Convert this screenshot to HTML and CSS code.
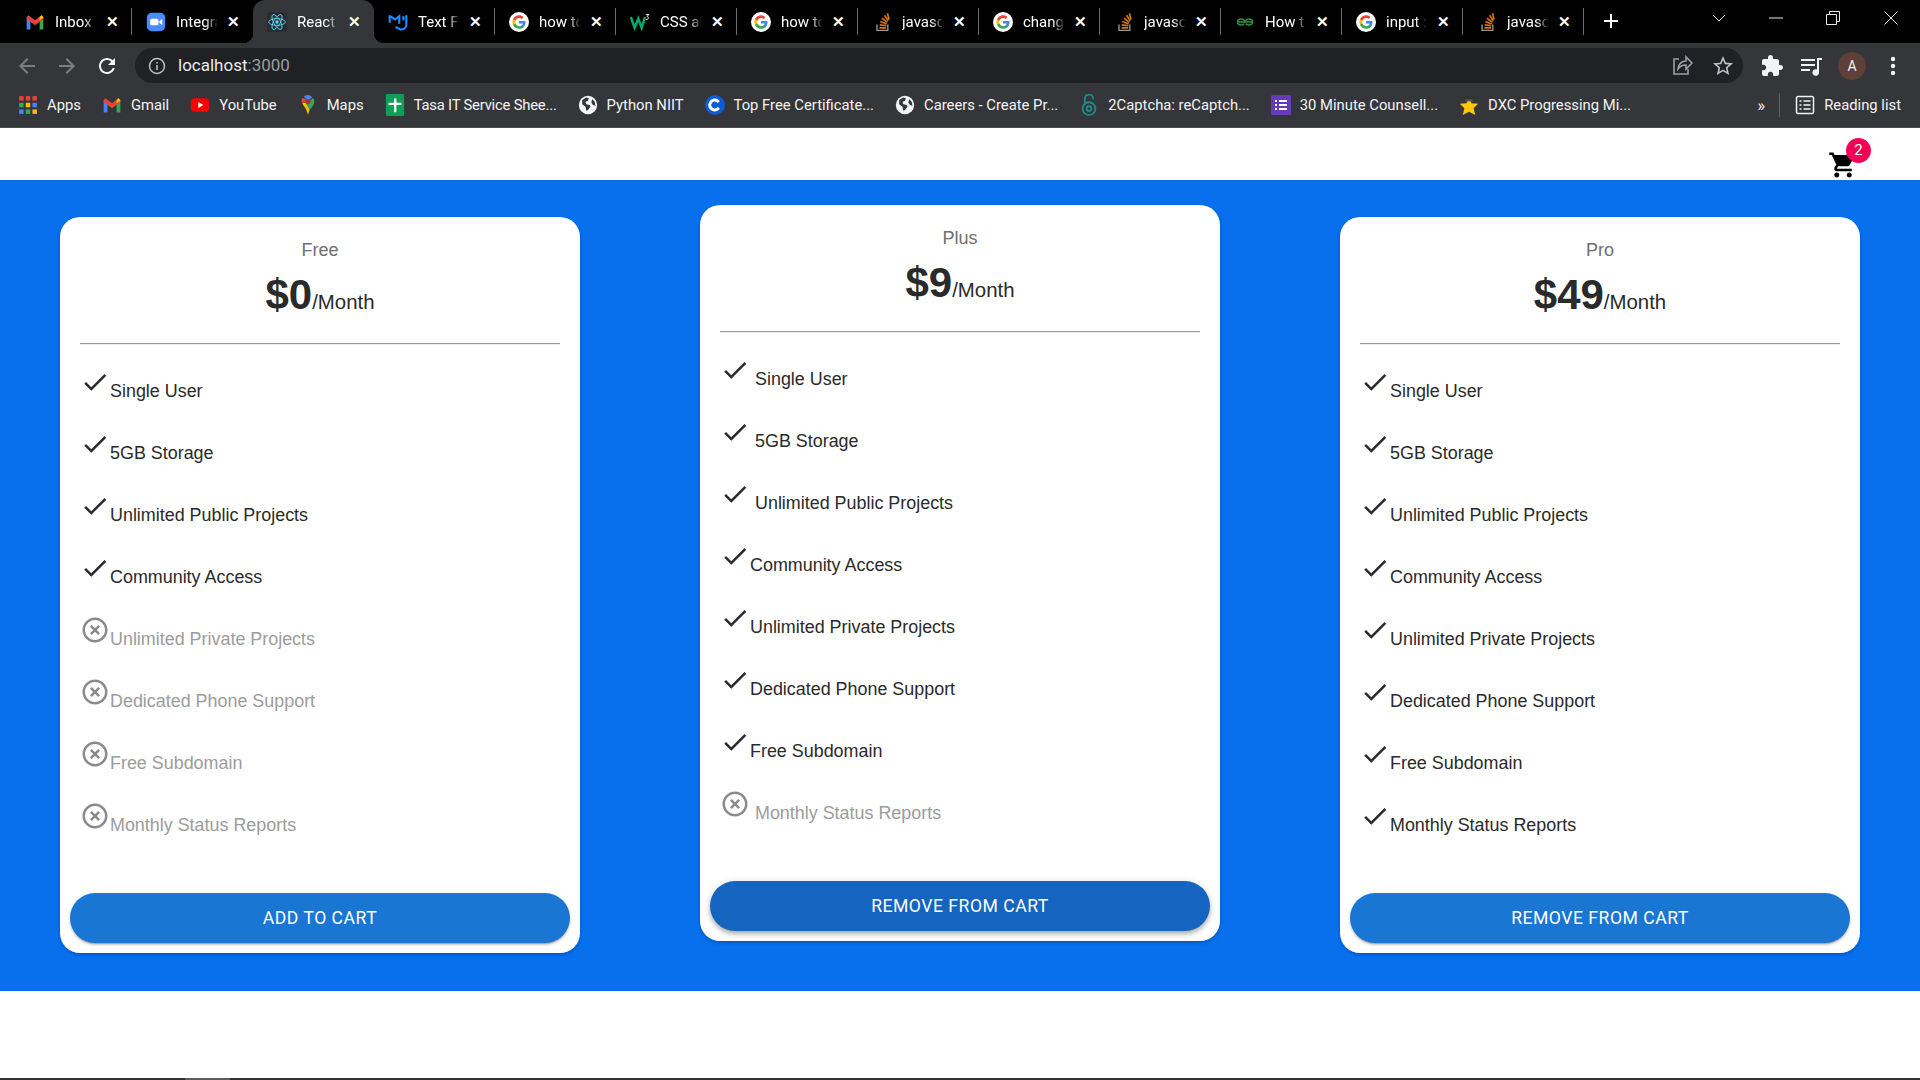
FILE: index.html
```html
<!DOCTYPE html>
<html lang="en">
<head>
    <meta charset="UTF-8">
    <title>React App</title>
    <link rel="stylesheet" href="styles.css">
</head>
<body>
    <svg class="sprite" xmlns="http://www.w3.org/2000/svg">
        <symbol id="fav-gmail" viewBox="0 0 24 24">
            <path fill="#4285f4" d="M2 21V7l4.500 3v11z"/>
            <path fill="#34a853" d="M22 21V7l-4.500 3v11z"/>
            <path fill="#ea4335" d="M2 6l2-2.200L12 10l8-6.200L22 6v2.500L12 16 2 8.500z"/>
            <path fill="#fbbc04" d="M17.500 10L22 7V6l-2-2.200-2.500 2z"/>
        </symbol>
        <symbol id="fav-zoom" viewBox="0 0 24 24">
            <rect x="1" y="1" width="22" height="22" rx="6" fill="#4a8cff"/>
            <rect x="5" y="8" width="10" height="8" rx="2" fill="#fff"/>
            <path fill="#fff" d="M16 11l3.500-2.500v7L16 13z"/>
        </symbol>
        <symbol id="fav-react" viewBox="0 0 24 24">
            <rect width="24" height="24" rx="2" fill="#2a2d31"/>
            <g fill="none" stroke="#61dafb" stroke-width="1">
                <ellipse cx="12" cy="12" rx="10" ry="4"/>
                <ellipse cx="12" cy="12" rx="10" ry="4" transform="rotate(60 12 12)"/>
                <ellipse cx="12" cy="12" rx="10" ry="4" transform="rotate(120 12 12)"/>
            </g>
            <circle cx="12" cy="12" r="2" fill="#61dafb"/>
        </symbol>
        <symbol id="fav-mui" viewBox="0 0 24 24">
            <g fill="none" stroke="#1a8cff" stroke-width="2.600">
                <path d="M2 4v9M2.500 5l6 4 5-4v9"/>
                <path d="M22 4v12c0 3-3 5-7 5l-6-3"/>
                <path d="M18.500 5v5"/>
            </g>
        </symbol>
        <symbol id="fav-google" viewBox="0 0 30 30">
            <circle cx="15" cy="15" r="15" fill="#fff"/>
            <g transform="translate(5 5) scale(.84)">
                <path fill="#4285f4" d="M23.500 12.300c0-.8-.1-1.600-.2-2.300H12v4.500h6.500c-.3 1.500-1.100 2.800-2.400 3.600v3h3.900c2.300-2.100 3.500-5.200 3.500-8.800z"/>
                <path fill="#34a853" d="M12 24c3.200 0 6-1.100 8-2.900l-3.900-3c-1.100.7-2.500 1.200-4.100 1.200-3.100 0-5.800-2.100-6.700-5H1.300v3.100C3.300 21.300 7.400 24 12 24z"/>
                <path fill="#fbbc04" d="M5.300 14.300c-.2-.7-.4-1.500-.4-2.300s.1-1.600.4-2.300V6.600h-4C.5 8.200 0 10 0 12s.5 3.800 1.300 5.400z"/>
                <path fill="#ea4335" d="M12 4.800c1.800 0 3.300.6 4.600 1.800l3.400-3.400C18 1.200 15.200 0 12 0 7.400 0 3.300 2.700 1.300 6.600l4 3.100c.9-2.800 3.600-4.900 6.700-4.900z"/>
            </g>
        </symbol>
        <symbol id="fav-w3" viewBox="0 0 24 24">
            <path fill="none" stroke="#04aa6d" stroke-width="3" d="M1 6l4.500 13L10 8l4 11 4-13"/>
            <path fill="none" stroke="#fff" stroke-width="1.200" d="M19 3h3.500l-2 2.500c2 0 2.500 3-.5 3.500h-1"/>
        </symbol>
        <symbol id="fav-so" viewBox="0 0 24 24">
            <path fill="none" stroke="#999" stroke-width="1.600" d="M6 15v7h13v-7"/>
            <g fill="none" stroke="#d9730d" stroke-width="2">
                <path d="M9 19h8M9.300 15.500l8 1M10 11.500l7.600 3M12 7.500l6.500 5M15 4l4.500 6.500M18.500 1.500l2 7.500"/>
            </g>
        </symbol>
        <symbol id="fav-gfg" viewBox="0 0 24 24">
            <g fill="none" stroke="#2f8d46" stroke-width="1.800">
                <path d="M3 12h18M12 12c-.5-2.500-2-3.500-4.500-3.500S3 10 3 12s2 3.500 4.500 3.500c1.500 0 3-.5 3.500-1.500"/>
                <path d="M12 12c.5-2.500 2-3.500 4.500-3.500S21 10 21 12s-2 3.500-4.500 3.500c-1.500 0-3-.5-3.500-1.500"/>
            </g>
        </symbol>
        <symbol id="bm-apps" viewBox="0 0 18 18">
            <rect x="1" y="1" width="4" height="4" fill="#ea4335"/><rect x="7" y="1" width="4" height="4" fill="#ea4335"/><rect x="13" y="1" width="4" height="4" fill="#ea4335"/>
            <rect x="1" y="7" width="4" height="4" fill="#34a853"/><rect x="7" y="7" width="4" height="4" fill="#fbbc04"/><rect x="13" y="7" width="4" height="4" fill="#4285f4"/>
            <rect x="1" y="13" width="4" height="4" fill="#4285f4"/><rect x="7" y="13" width="4" height="4" fill="#34a853"/><rect x="13" y="13" width="4" height="4" fill="#fbbc04"/>
        </symbol>
        <symbol id="bm-youtube" viewBox="0 0 24 24">
            <rect x="1" y="4" width="22" height="16" rx="4.500" fill="#f00"/>
            <path fill="#fff" d="M10 8.500l6 3.500-6 3.500z"/>
        </symbol>
        <symbol id="bm-maps" viewBox="0 0 24 24">
            <path fill="#4285f4" d="M12 0c-2 0-4 .7-5 2l5 5 5-4c-1-2-3-3-5-3z"/>
            <path fill="#ea4335" d="M5 3.500C4 6 4 8 5 9.500L9 8l1-3z"/>
            <path fill="#fbbc04" d="M5 9.500c1.500 3.500 5.500 7 7 14.500.5-2 1-4 2-6l-3.500-9z"/>
            <path fill="#34a853" d="M14 18c1.500-2.500 5.500-5 5.500-10.500 0-1.500-.5-3-1.500-4l-8 7.500z"/>
            <circle cx="12" cy="8" r="3" fill="#a33"/>
        </symbol>
        <symbol id="bm-sheet" viewBox="0 0 20 24">
            <rect width="20" height="24" rx="1.500" fill="#0f9d58"/>
            <path fill="#fff" d="M9 5h2.500v4.500H17V12h-5.500v8H9v-8H3V9.500h6z"/>
        </symbol>
        <symbol id="bm-globe" viewBox="0 0 24 24">
            <circle cx="12" cy="12" r="11" fill="#f1f3f4"/>
            <path fill="#35363a" d="M5 6l5-3 3 1-1 3-3 1 1 3 4 1 1 2-3 4-2 1-1-5-4-3zM17 5l3 3 1 5-3-1-2-3z"/>
        </symbol>
        <symbol id="bm-c" viewBox="0 0 24 24">
            <circle cx="12" cy="12" r="12" fill="#0b5cd5"/>
            <path fill="none" stroke="#fff" stroke-width="3.600" d="M16.500 8.500a6 6 0 1 0 0 7"/>
        </symbol>
        <symbol id="bm-lock" viewBox="0 0 16 24">
            <g fill="none" stroke="#1b8a8f" stroke-width="2">
                <path d="M3.500 10V5a4.500 4.500 0 0 1 9 0v1"/>
                <circle cx="8" cy="16" r="7"/>
                <circle cx="8" cy="16" r="2.600"/>
            </g>
        </symbol>
        <symbol id="bm-forms" viewBox="0 0 20 20">
            <rect width="20" height="20" rx="1.500" fill="#673ab7"/>
            <path fill="#fff" d="M4 5h2v2H4zM8 5h8v2H8zM4 9h2v2H4zM8 9h8v2H8zM4 13h2v2H4zM8 13h8v2H8z"/>
        </symbol>
        <symbol id="bm-star" viewBox="0 0 24 24">
            <path fill="#fdc70c" d="M12 4l3 6 8 .5-5.500 5.500 2 8-7.500-4-7.500 4 2-8L1 10.500 9 10z"/>
            <path fill="#333" d="M12 0l8 3.500L12 7 4 3.500z"/>
            <path fill="#555" d="M7.500 5h9v2.500h-9z"/>
        </symbol>
        <symbol id="ic-check" viewBox="0 0 24 24">
            <path d="M9 16.170 4.830 12l-1.420 1.410L9 19 21 7l-1.410-1.410z"/>
        </symbol>
        <symbol id="ic-off" viewBox="0 0 24 24">
            <path d="M14.590 8 12 10.590 9.410 8 8 9.410 10.590 12 8 14.590 9.410 16 12 13.410 14.590 16 16 14.590 13.410 12 16 9.410 14.590 8zM12 2C6.470 2 2 6.470 2 12s4.470 10 10 10 10-4.470 10-10S17.530 2 12 2zm0 18c-4.410 0-8-3.590-8-8s3.590-8 8-8 8 3.590 8 8-3.590 8-8 8z"/>
        </symbol>
    </svg>

    <div class="tabstrip">
        <div class="tab"><svg class="favicon"><use href="#fav-gmail"/></svg><span class="tab-title">Inbox</span><span class="tab-close">&#10005;</span></div>
        <div class="tab tab-plain"><svg class="favicon"><use href="#fav-zoom"/></svg><span class="tab-title">Integra</span><span class="tab-close">&#10005;</span></div>
        <div class="tab tab-active tab-plain"><svg class="favicon"><use href="#fav-react"/></svg><span class="tab-title">React A</span><span class="tab-close">&#10005;</span></div>
        <div class="tab"><svg class="favicon"><use href="#fav-mui"/></svg><span class="tab-title">Text Fi</span><span class="tab-close">&#10005;</span></div>
        <div class="tab"><svg class="favicon"><use href="#fav-google"/></svg><span class="tab-title">how to</span><span class="tab-close">&#10005;</span></div>
        <div class="tab"><svg class="favicon"><use href="#fav-w3"/></svg><span class="tab-title">CSS al</span><span class="tab-close">&#10005;</span></div>
        <div class="tab"><svg class="favicon"><use href="#fav-google"/></svg><span class="tab-title">how to</span><span class="tab-close">&#10005;</span></div>
        <div class="tab"><svg class="favicon"><use href="#fav-so"/></svg><span class="tab-title">javascr</span><span class="tab-close">&#10005;</span></div>
        <div class="tab"><svg class="favicon"><use href="#fav-google"/></svg><span class="tab-title">chang</span><span class="tab-close">&#10005;</span></div>
        <div class="tab"><svg class="favicon"><use href="#fav-so"/></svg><span class="tab-title">javascr</span><span class="tab-close">&#10005;</span></div>
        <div class="tab"><svg class="favicon"><use href="#fav-gfg"/></svg><span class="tab-title">How t</span><span class="tab-close">&#10005;</span></div>
        <div class="tab"><svg class="favicon"><use href="#fav-google"/></svg><span class="tab-title">input :</span><span class="tab-close">&#10005;</span></div>
        <div class="tab"><svg class="favicon"><use href="#fav-so"/></svg><span class="tab-title">javasc</span><span class="tab-close">&#10005;</span></div>
        <svg class="newtab" viewBox="0 0 16 16"><path d="M7 1h2v6h6v2H9v6H7V9H1V7h6z"/></svg>
        <div class="window-controls">
            <svg class="win-caret" viewBox="0 0 14 8"><path d="M1 1l6 6 6-6"/></svg>
            <svg class="win-min" viewBox="0 0 14 14"><path d="M0 7h14"/></svg>
            <svg class="win-restore" viewBox="0 0 14 14"><path d="M.5 3.500h10v10H.5zM3.500 3.500v-3h10v10h-3"/></svg>
            <svg class="win-close" viewBox="0 0 14 14"><path d="M.5.500l13 13M13.500.500l-13 13"/></svg>
        </div>
    </div>

    <div class="toolbar">
        <svg class="tool-icon tool-dim" viewBox="0 0 24 24"><path d="M20 11H7.830l5.590-5.590L12 4l-8 8 8 8 1.410-1.410L7.830 13H20v-2z"/></svg>
        <svg class="tool-icon tool-dim" viewBox="0 0 24 24"><path d="M4 11h12.170l-5.590-5.590L12 4l8 8-8 8-1.410-1.410L16.170 13H4v-2z"/></svg>
        <svg class="tool-icon" viewBox="0 0 24 24"><path d="M17.650 6.350C16.200 4.900 14.210 4 12 4c-4.420 0-7.990 3.580-7.990 8s3.570 8 7.990 8c3.730 0 6.840-2.550 7.730-6h-2.080c-.82 2.330-3.040 4-5.650 4-3.310 0-6-2.690-6-6s2.690-6 6-6c1.660 0 3.140.69 4.220 1.780L13 11h7V4l-2.350 2.350z"/></svg>
        <div class="omnibox">
            <svg class="info-icon" viewBox="0 0 20 20">
                <circle cx="10" cy="10" r="7.500"/>
                <path d="M10 9v5M10 6v1.600"/>
            </svg>
            <span class="url">localhost<span class="url-port">:3000</span></span>
            <svg class="omni-icon omni-share" viewBox="0 0 24 24"><path d="M9 5H4v15h14v-5M8 15c0-5 4-8 8-8V3l6 6-6 6v-4c-4 0-6 1-8 4z"/></svg>
            <svg class="omni-icon" viewBox="0 0 24 24"><path fill="#bdc1c6" d="M22 9.240l-7.190-.62L12 2 9.190 8.630 2 9.240l5.460 4.730L5.820 21 12 17.270 18.180 21l-1.630-7.030L22 9.240zM12 15.400l-3.760 2.270 1-4.280-3.320-2.880 4.380-.38L12 6.100l1.710 4.040 4.380.38-3.320 2.880 1 4.280L12 15.400z"/></svg>
        </div>
        <div class="toolbar-actions">
            <svg class="tool-icon" viewBox="0 0 24 24"><path d="M20.500 11H19V7c0-1.100-.9-2-2-2h-4V3.500C13 2.120 11.880 1 10.500 1S8 2.120 8 3.500V5H4c-1.100 0-1.990.9-1.990 2v3.800H3.500c1.490 0 2.700 1.210 2.700 2.700s-1.210 2.700-2.700 2.700H2V20c0 1.100.9 2 2 2h3.800v-1.500c0-1.490 1.210-2.700 2.700-2.700 1.490 0 2.700 1.210 2.700 2.700V22H17c1.100 0 2-.9 2-2v-4h1.500c1.380 0 2.500-1.120 2.500-2.500S21.880 11 20.500 11z"/></svg>
            <svg class="tool-icon" viewBox="0 0 24 24"><path d="M2 5h14v2H2zM2 10h14v2H2zM2 15h9v2H2zM18 4h5v2h-3v12.500a3.300 3.300 0 1 1-2-3z"/></svg>
            <span class="avatar">A</span>
            <svg class="tool-icon" viewBox="0 0 24 24"><circle cx="12" cy="5" r="2.200"/><circle cx="12" cy="12" r="2.200"/><circle cx="12" cy="19" r="2.200"/></svg>
        </div>
    </div>

    <div class="bookmarks">
        <span class="bookmark"><svg class="bm-icon"><use href="#bm-apps"/></svg>Apps</span>
        <span class="bookmark"><svg class="bm-icon"><use href="#fav-gmail"/></svg>Gmail</span>
        <span class="bookmark"><svg class="bm-icon"><use href="#bm-youtube"/></svg>YouTube</span>
        <span class="bookmark"><svg class="bm-icon"><use href="#bm-maps"/></svg>Maps</span>
        <span class="bookmark bm-tight"><svg class="bm-icon"><use href="#bm-sheet"/></svg>Tasa IT Service Shee...</span>
        <span class="bookmark"><svg class="bm-icon"><use href="#bm-globe"/></svg>Python NIIT</span>
        <span class="bookmark"><svg class="bm-icon"><use href="#bm-c"/></svg>Top Free Certificate...</span>
        <span class="bookmark"><svg class="bm-icon"><use href="#bm-globe"/></svg>Careers - Create Pr...</span>
        <span class="bookmark"><svg class="bm-icon"><use href="#bm-lock"/></svg>2Captcha: reCaptch...</span>
        <span class="bookmark"><svg class="bm-icon"><use href="#bm-forms"/></svg>30 Minute Counsell...</span>
        <span class="bookmark"><svg class="bm-icon"><use href="#bm-star"/></svg>DXC Progressing Mi...</span>
        <span class="bm-more">&raquo;</span>
        <span class="bookmark bm-reading">
            <svg class="bm-icon reading-icon" viewBox="0 0 20 20"><rect x="1.500" y="1.500" width="17" height="17" rx="1.500"/><path d="M4.500 6h2M8.500 6h7M4.500 10h2M8.500 10h7M4.500 14h2M8.500 14h7"/></svg>Reading list
        </span>
    </div>

    <div class="page">
        <header class="app-bar">
            <span class="cart">
                <svg class="cart-icon" viewBox="0 0 24 24"><path d="M7 18c-1.100 0-1.990.9-1.990 2S5.900 22 7 22s2-.9 2-2-.9-2-2-2zM1 2v2h2l3.600 7.590-1.350 2.450c-.16.280-.25.610-.25.960 0 1.100.9 2 2 2h12v-2H7.420c-.14 0-.25-.11-.25-.25l.03-.12.9-1.630h7.450c.75 0 1.410-.41 1.750-1.030l3.580-6.470c.08-.12.12-.28.12-.46 0-.55-.45-1-1-1H5.210l-.94-2H1zm16 16c-1.100 0-1.990.9-1.990 2s.89 2 1.990 2 2-.9 2-2-.9-2-2-2z"/></svg>
                <span class="cart-badge">2</span>
            </span>
        </header>

        <section class="pricing">
            <div class="plan">
                <div class="plan-name">Free</div>
                <div class="plan-price"><strong>$0</strong>/Month</div>
                <hr class="plan-rule">
                <ul class="features">
                    <li><svg class="feature-icon"><use href="#ic-check"/></svg><span>Single User</span></li>
                    <li><svg class="feature-icon"><use href="#ic-check"/></svg><span>5GB Storage</span></li>
                    <li><svg class="feature-icon"><use href="#ic-check"/></svg><span>Unlimited Public Projects</span></li>
                    <li><svg class="feature-icon"><use href="#ic-check"/></svg><span>Community Access</span></li>
                    <li class="off"><svg class="feature-icon"><use href="#ic-off"/></svg><span>Unlimited Private Projects</span></li>
                    <li class="off"><svg class="feature-icon"><use href="#ic-off"/></svg><span>Dedicated Phone Support</span></li>
                    <li class="off"><svg class="feature-icon"><use href="#ic-off"/></svg><span>Free Subdomain</span></li>
                    <li class="off"><svg class="feature-icon"><use href="#ic-off"/></svg><span>Monthly Status Reports</span></li>
                </ul>
                <button class="plan-btn" type="button">Add to cart</button>
            </div>

            <div class="plan plan-featured">
                <div class="plan-name">Plus</div>
                <div class="plan-price"><strong>$9</strong>/Month</div>
                <hr class="plan-rule">
                <ul class="features">
                    <li class="indent"><svg class="feature-icon"><use href="#ic-check"/></svg><span>Single User</span></li>
                    <li class="indent"><svg class="feature-icon"><use href="#ic-check"/></svg><span>5GB Storage</span></li>
                    <li class="indent"><svg class="feature-icon"><use href="#ic-check"/></svg><span>Unlimited Public Projects</span></li>
                    <li><svg class="feature-icon"><use href="#ic-check"/></svg><span>Community Access</span></li>
                    <li><svg class="feature-icon"><use href="#ic-check"/></svg><span>Unlimited Private Projects</span></li>
                    <li><svg class="feature-icon"><use href="#ic-check"/></svg><span>Dedicated Phone Support</span></li>
                    <li><svg class="feature-icon"><use href="#ic-check"/></svg><span>Free Subdomain</span></li>
                    <li class="off indent"><svg class="feature-icon"><use href="#ic-off"/></svg><span>Monthly Status Reports</span></li>
                </ul>
                <button class="plan-btn plan-btn-hover" type="button">Remove from cart</button>
            </div>

            <div class="plan">
                <div class="plan-name">Pro</div>
                <div class="plan-price"><strong>$49</strong>/Month</div>
                <hr class="plan-rule">
                <ul class="features">
                    <li><svg class="feature-icon"><use href="#ic-check"/></svg><span>Single User</span></li>
                    <li><svg class="feature-icon"><use href="#ic-check"/></svg><span>5GB Storage</span></li>
                    <li><svg class="feature-icon"><use href="#ic-check"/></svg><span>Unlimited Public Projects</span></li>
                    <li><svg class="feature-icon"><use href="#ic-check"/></svg><span>Community Access</span></li>
                    <li><svg class="feature-icon"><use href="#ic-check"/></svg><span>Unlimited Private Projects</span></li>
                    <li><svg class="feature-icon"><use href="#ic-check"/></svg><span>Dedicated Phone Support</span></li>
                    <li><svg class="feature-icon"><use href="#ic-check"/></svg><span>Free Subdomain</span></li>
                    <li><svg class="feature-icon"><use href="#ic-check"/></svg><span>Monthly Status Reports</span></li>
                </ul>
                <button class="plan-btn" type="button">Remove from cart</button>
            </div>
        </section>
    </div>

    <div class="scrollbar"><span class="scrollbar-thumb"></span></div>
</body>
</html>
```

FILE: styles.css
```css
* {
    box-sizing: border-box;
}

body {
    margin: 0;
    height: 1080px;
    overflow: hidden;
    display: flex;
    flex-direction: column;
    background: #fff;
    font-family: 'Liberation Sans', Arial, sans-serif;
}

.sprite {
    display: none;
}

/* browser chrome */
.tabstrip {
    height: 43px;
    background: #000;
    display: flex;
    padding-left: 11px;
    color: #fff;
    font-family: 'Roboto', sans-serif;
}

.tab {
    position: relative;
    width: 121px;
    height: 43px;
    display: flex;
    align-items: center;
    padding: 0 14px 0 14px;
    border-right: 1px solid #5f6368;
    border-image: linear-gradient(#000 9px, #6a6a6a 9px, #6a6a6a 34px, #000 34px) 1;
    font-size: 15px;
    flex: none;
}

.tab-plain {
    border-right: 0;
}

.tab-active {
    background: #35363a;
    border-radius: 12px 12px 0 0;
}

.tab-active::before,
.tab-active::after {
    content: "";
    position: absolute;
    bottom: 0;
    width: 10px;
    height: 10px;
}

.tab-active::before {
    left: -10px;
    background: radial-gradient(circle at 0 0, #000 10px, #35363a 10.5px);
}

.tab-active::after {
    right: -10px;
    background: radial-gradient(circle at 100% 0, #000 10px, #35363a 10.5px);
}

.favicon {
    width: 20px;
    height: 20px;
    flex: none;
    margin-right: 10px;
    margin-top: 1px;
}

.tab-title {
    width: 42px;
    flex: none;
    overflow: hidden;
    white-space: nowrap;
    -webkit-mask-image: linear-gradient(90deg, #000 70%, transparent);
    mask-image: linear-gradient(90deg, #000 70%, transparent);
}

.tab-close {
    margin-left: 9px;
    font-size: 15px;
    font-weight: 700;
    width: 14px;
    text-align: center;
}

.newtab {
    width: 16px;
    height: 16px;
    margin: 13px 0 0 19px;
    fill: #fff;
}

.window-controls {
    display: flex;
    align-items: center;
    margin-left: auto;
    height: 36px;
}

.window-controls svg {
    fill: none;
    stroke: #e8eaed;
    stroke-width: 1;
    width: 14px;
    height: 14px;
    flex: none;
}

.win-caret {
    margin-right: 43px;
}

.win-min {
    margin-right: 43px;
}

.win-restore {
    margin-right: 44px;
}

.window-controls .win-close {
    margin-right: 22px;
}

.toolbar {
    height: 40px;
    padding: 5px 15px 0;
    background: #35363a;
    display: flex;
    align-items: center;
    gap: 16px;
}

.tool-icon {
    width: 24px;
    height: 24px;
    flex: none;
    fill: #f1f3f4;
}

.tool-dim {
    fill: #7c7e81;
}

.omnibox {
    flex: 1;
    height: 35px;
    background: #202124;
    border-radius: 18px;
    display: flex;
    align-items: center;
    padding: 0 8px 0 12px;
    gap: 17px;
    margin-right: 1px;
    color: #e8eaed;
    font: 17px 'Roboto', sans-serif;
}

.info-icon {
    width: 20px;
    height: 20px;
    flex: none;
    fill: none;
    stroke: #bdc1c6;
    stroke-width: 1.500;
}

.url {
    flex: 1;
    margin-left: -6px;
    margin-top: -1px;
}

.url-port {
    color: #9aa0a6;
}

.omni-icon {
    width: 24px;
    height: 24px;
    flex: none;
}

.omni-share {
    fill: none;
    stroke: #9aa0a6;
    stroke-width: 1.600;
}

.toolbar-actions {
    display: flex;
    align-items: center;
    gap: 15px;
}

.avatar {
    width: 28px;
    height: 28px;
    border-radius: 50%;
    background: #5d4037;
    color: #f1f3f4;
    font: 14px/28px 'Roboto', sans-serif;
    text-align: center;
}

.bookmarks {
    height: 45px;
    background: #35363a;
    border-bottom: 1px solid #4a4b4e;
    display: flex;
    align-items: center;
    gap: 21px;
    padding: 0 19px 0 18px;
    color: #f1f3f4;
    font: 14.8px 'Roboto', sans-serif;
    white-space: nowrap;
}

.bookmark {
    display: flex;
    align-items: center;
    gap: 9px;
}

.bm-tight {
    letter-spacing: -0.2px;
}

.bm-icon {
    width: 20px;
    height: 22px;
    flex: none;
}

.bm-more {
    margin-left: auto;
    padding-right: 14px;
    border-right: 1px solid #5f6368;
    line-height: 24px;
    font-size: 17px;
}

.bm-reading {
    margin-left: -6px;
}

.reading-icon {
    fill: none;
    stroke: #f1f3f4;
    stroke-width: 1.500;
}

/* page */
.page {
    flex: 1;
    display: flex;
    flex-direction: column;
}

.app-bar {
    height: 52px;
    display: flex;
    justify-content: flex-end;
    align-items: flex-end;
    padding-right: 62px;
}

.cart {
    position: relative;
    display: block;
    height: 30px;
}

.cart-icon {
    width: 30px;
    height: 30px;
    display: block;
}

.cart-badge {
    position: absolute;
    top: -12px;
    left: 18px;
    width: 25px;
    height: 25px;
    border-radius: 50%;
    background: #f50057;
    color: #fff;
    font: 15px/25px 'Roboto', sans-serif;
    text-align: center;
}

.pricing {
    height: 811px;
    background: #086fed;
    display: flex;
    align-items: center;
    justify-content: space-between;
    padding: 0 60px 2px;
}

.plan {
    width: 520px;
    height: 736px;
    background: #fff;
    border-radius: 20px;
    padding: 20px 10px 10px;
    display: flex;
    flex-direction: column;
    box-shadow: 0 2px 4px -1px rgba(0, 0, 0, 0.2), 0 1px 3px rgba(0, 0, 0, 0.12);
    color: #2a2a2a;
}

.plan-featured {
    transform: translateY(-12px);
}

.plan-name {
    text-align: center;
    font-size: 18px;
    line-height: 26px;
    color: #6f6f6f;
}

.plan-price {
    text-align: center;
    font-size: 20.4px;
    margin-top: 7px;
    line-height: 50px;
}

.plan-price strong {
    font-size: 42px;
}

.plan-rule {
    margin: 16px 10px 0;
    height: 2px;
    border: 0;
    border-top: 1px solid #999;
    border-bottom: 1px solid #eee;
}

.features {
    list-style: none;
    margin: 24px 0 0;
    padding: 0 10px;
    font-size: 17.92px;
}

.features li {
    height: 62px;
    display: flex;
    align-items: flex-start;
}

.features span {
    padding-top: 12px;
    line-height: 21px;
}

.feature-icon {
    width: 30px;
    height: 30px;
    flex: none;
    margin-top: -2px;
    fill: #2a2a2a;
}

.features .indent span {
    margin-left: 5px;
}

.features .off {
    color: #9c9c9c;
}

.off .feature-icon {
    fill: #8a8a8a;
}

.plan-btn {
    margin-top: auto;
    width: 100%;
    height: 50px;
    border: none;
    border-radius: 25px;
    background: #1976d2;
    color: #fff;
    font: 400 17.6px 'Roboto', sans-serif;
    letter-spacing: 0.5px;
    text-transform: uppercase;
    box-shadow: 0 3px 1px -2px rgba(0, 0, 0, 0.2), 0 2px 2px rgba(0, 0, 0, 0.14), 0 1px 5px rgba(0, 0, 0, 0.12);
}

.plan-btn-hover {
    background: #1565c0;
    box-shadow: 0 2px 4px -1px rgba(0, 0, 0, 0.2), 0 4px 5px rgba(0, 0, 0, 0.14), 0 1px 10px rgba(0, 0, 0, 0.12);
}

.scrollbar {
    height: 2px;
    background: #333;
    margin-top: auto;
}

.scrollbar-thumb {
    display: block;
    width: 45px;
    height: 2px;
    margin-left: 185px;
    background: #5c5c5c;
}
```
